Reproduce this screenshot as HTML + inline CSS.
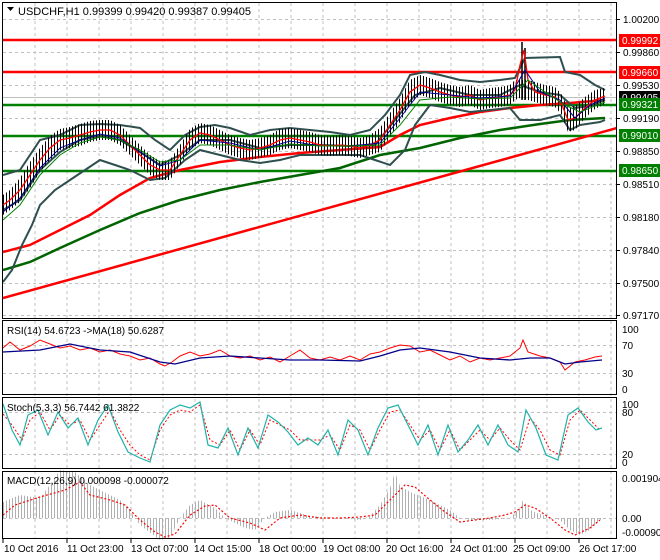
<!DOCTYPE html>
<html><head><meta charset="utf-8"><style>
body{margin:0;background:#fff;width:660px;height:560px;overflow:hidden}
svg{display:block;font-family:"Liberation Sans",sans-serif;font-size:10px}
</style></head><body>
<svg width="660" height="560" viewBox="0 0 660 560">
<defs>
<pattern id="hs" width="3" height="10" patternUnits="userSpaceOnUse"><rect x="0" y="0" width="1" height="10" fill="#b0b0b0"/></pattern>
<pattern id="bars" width="3" height="10" patternUnits="userSpaceOnUse"><rect x="0" y="0" width="1" height="10" fill="#000"/></pattern>
<clipPath id="cm"><rect x="3" y="3" width="614" height="315"/></clipPath>
</defs>
<rect width="660" height="560" fill="#fff"/>
<g stroke="#c0c0c0" stroke-dasharray="3,3" stroke-width="1">
<path d="M35 3V538M67 3V538M99 3V538M131 3V538M163 3V538M195 3V538M227 3V538M259 3V538M291 3V538M323 3V538M355 3V538M387 3V538M419 3V538M451 3V538M483 3V538M515 3V538M547 3V538M579 3V538M611 3V538"/>
<path d="M3 19.5H617M3 52.5H617M3 85.5H617M3 118.5H617M3 151.5H617M3 184.5H617M3 217.5H617M3 250.5H617M3 283.5H617M3 315.5H617"/>
<path d="M3 345.5H617M3 373.5H617M3 412.5H617M3 454.5H617M3 518.5H617"/>
</g>
<g clip-path="url(#cm)">
<line x1="3" y1="97.5" x2="617" y2="97.5" stroke="#c0c0c0"/>
<g stroke-width="2.5">
<line x1="3" y1="40" x2="617" y2="40" stroke="#ff0000"/>
<line x1="3" y1="72" x2="617" y2="72" stroke="#ff0000"/>
<line x1="3" y1="105" x2="617" y2="105" stroke="#008000"/>
<line x1="3" y1="136" x2="617" y2="136" stroke="#008000"/>
<line x1="3" y1="171" x2="617" y2="171" stroke="#008000"/>
</g>
<line x1="3" y1="298" x2="617" y2="128" stroke="#ff0000" stroke-width="2.5"/>
<polyline fill="none" stroke="#006400" stroke-width="2.5" points="3,270 30,262 60,248 100,230 140,213 180,200 220,190 260,182 300,175 340,168 380,155 420,148 460,138 500,130 540,124 570,120 605,118"/>
<polyline fill="none" stroke="#ff0000" stroke-width="2.5" points="3,252 30,245 60,230 90,215 120,195 150,178 180,170 220,162 260,157 300,153 340,150 380,147 400,135 420,125 450,118 480,112 510,108 540,105 570,103 605,100"/>
<g fill="none" stroke="#2f4f4f" stroke-width="2">
<polyline points="3,175 20,170 40,140 60,135 80,125 100,124 120,125 140,128 155,140 170,150 185,135 200,127 215,125 230,128 250,135 270,130 290,128 310,130 330,132 350,135 370,130 385,115 400,95 410,75 425,72 440,75 460,80 480,82 500,80 515,78 525,58 560,57 565,72 580,75 595,85 605,90"/>
<polyline points="3,282 12,270 22,245 32,225 40,205 55,190 70,180 85,170 100,160 115,165 130,170 150,180 165,178 185,160 200,150 220,155 240,160 260,163 280,160 300,155 320,155 340,155 360,155 375,160 390,165 405,150 415,125 430,105 450,108 470,112 490,110 510,108 520,120 540,120 560,115 570,130 580,125 600,122 605,120"/>
<polyline points="3,210 20,200 40,170 60,152 80,140 100,136 120,140 140,152 160,165 180,155 200,140 230,140 260,148 290,145 320,145 350,146 375,145 395,120 415,95 440,88 470,95 500,95 520,85 540,92 560,95 575,108 590,106 605,100"/>
</g>
<!-- bars band -->
<polygon fill="url(#bars)" points="3,195 10,190 20,178 30,162 40,148 50,136 60,129 70,127 80,124 90,121 100,120 110,120 120,125 130,135 140,145 150,155 160,161 170,160 180,145 190,129 200,123 210,125 220,130 230,135 240,138 250,140 260,138 270,135 280,129 290,128 300,130 310,132 320,135 330,136 340,135 350,136 360,138 370,135 380,128 390,113 400,98 410,80 420,75 430,78 440,82 450,85 460,87 470,85 480,90 490,88 500,87 510,85 515,80 520,80 528,80 535,82 545,85 555,87 562,95 568,108 575,106 585,97 595,90 605,88 605,104 595,109 585,118 575,130 568,132 562,115 555,107 545,105 535,102 528,100 520,98 515,100 510,105 500,107 490,108 480,110 470,105 460,107 450,105 440,102 430,98 420,95 410,104 400,122 390,137 380,152 370,155 360,158 350,156 340,155 330,156 320,155 310,152 300,150 290,148 280,150 270,155 260,158 250,160 240,158 230,155 220,150 210,145 200,143 190,150 180,165 170,180 160,180 150,175 140,165 130,155 120,145 110,140 100,140 90,142 80,146 70,148 60,150 50,160 40,172 30,188 20,202 10,210 3,215"/>
<line x1="522" y1="42" x2="522" y2="100" stroke="#000" stroke-width="1.5"/>
<line x1="525" y1="48" x2="525" y2="100" stroke="#000" stroke-width="1.5"/>
<polyline fill="none" stroke="#ff0000" stroke-width="1.3" points="3,205 10,200 20,190 30,175 40,160 50,148 60,140 70,138 80,135 90,132 100,130 110,130 120,135 130,145 140,155 150,165 160,170 170,170 180,155 190,140 200,133 210,135 220,140 230,145 240,148 250,150 260,148 270,145 280,140 290,138 300,140 310,142 320,145 330,146 340,145 350,146 360,148 370,145 380,140 390,125 400,110 410,92 420,85 430,88 440,92 450,95 460,97 470,95 480,100 490,98 500,97 510,95 515,90 520,65 524,50 528,80 535,92 545,95 555,97 562,105 568,120 575,118 585,108 595,100 605,96"/>
<polyline fill="none" stroke="#00008b" stroke-width="1" points="3,212 20,198 40,168 60,148 80,140 100,134 120,138 140,152 160,166 180,160 200,140 230,143 260,150 290,141 320,146 350,146 380,143 400,118 420,92 450,95 480,98 510,96 525,70 540,92 560,100 575,118 590,105 605,98"/>
<polyline fill="none" stroke="#008000" stroke-width="1" points="3,220 20,205 40,175 60,155 80,143 100,137 120,140 140,150 160,162 180,160 200,145 230,145 260,150 290,144 320,146 350,146 380,145 400,125 420,100 450,97 480,99 510,98 528,80 545,92 565,105 580,112 605,102"/>
</g>
<polyline fill="none" stroke="#ff0000" stroke-width="1" points="3,348 10,342 20,350 30,346 40,340 50,344 60,348 70,346 80,350 90,348 100,352 110,350 120,354 130,356 140,360 150,358 160,364 165,366 172,362 180,356 190,352 200,356 210,354 220,350 230,356 240,358 250,356 260,360 270,357 280,362 290,356 300,350 310,358 320,360 330,357 340,360 350,356 360,360 370,354 380,352 390,348 400,345 410,346 420,352 430,350 440,355 450,360 460,356 470,362 480,358 490,360 500,358 510,356 520,348 523,340 528,352 540,356 550,358 560,362 565,370 575,362 585,360 595,357 602,356"/>
<polyline fill="none" stroke="#00008b" stroke-width="1.3" points="3,352 40,350 70,344 100,350 130,352 160,362 175,364 200,358 230,356 260,358 290,360 320,360 360,361 380,356 400,350 420,348 450,352 480,358 510,360 530,358 550,358 565,364 580,362 602,360"/>
<polyline fill="none" stroke="#ff0000" stroke-width="1" stroke-dasharray="2,2" points="3,414 12,425 22,440 30,420 40,412 50,430 60,415 70,425 80,420 90,440 100,425 110,410 120,430 130,445 140,455 150,460 160,430 170,415 180,410 190,412 200,405 210,440 220,445 230,430 240,450 250,430 260,445 270,420 280,425 290,430 300,440 310,440 320,440 330,435 340,450 350,425 360,430 370,450 380,430 390,412 400,410 410,425 420,440 430,430 440,450 450,430 460,450 470,440 480,430 490,440 500,428 510,440 520,450 530,418 540,430 550,450 560,455 570,420 580,410 590,420 600,430"/>
<polyline fill="none" stroke="#20b2aa" stroke-width="1.2" points="3,404 12,430 20,445 28,415 38,410 48,435 58,412 68,428 78,418 88,445 98,420 108,405 118,432 128,452 140,458 150,462 160,425 170,410 180,405 190,408 200,402 208,445 218,448 228,428 238,455 248,428 258,448 268,415 278,422 288,432 298,445 308,438 318,445 328,430 338,455 348,420 358,430 368,455 378,428 388,408 398,405 408,425 418,445 428,425 438,455 448,425 458,452 468,440 478,425 488,445 498,425 508,445 518,452 526,410 536,428 546,455 558,460 568,415 578,408 588,422 596,430 602,428"/>
<polygon fill="url(#hs)" points="3,518 3,502 20,495 40,498 50,485 60,470 75,472 90,485 100,490 120,500 130,510 135,518 140,525 160,540 170,538 180,518 190,505 200,500 215,508 225,518 245,528 255,530 265,518 275,512 290,510 310,516 340,518 360,520 370,516 380,505 390,488 395,472 400,486 410,492 430,500 450,510 460,518 470,520 490,520 510,518 520,508 523,500 530,510 545,516 560,520 570,530 580,535 590,530 600,520 605,518"/>
<polyline fill="none" stroke="#ff0000" stroke-width="1.2" stroke-dasharray="2,2" points="3,515 15,505 40,497 65,490 80,482 90,495 110,500 125,505 140,520 155,532 165,537 175,534 190,515 205,506 215,505 230,518 250,523 265,530 280,518 300,515 320,518 340,518 360,517 375,515 390,500 405,485 415,487 430,500 445,512 460,522 475,520 490,518 505,515 515,512 525,505 535,508 550,518 565,530 575,535 590,528 600,520"/>
<g fill="none" stroke="#000" stroke-width="1">
<rect x="2.5" y="2.5" width="614" height="316"/>
<rect x="2.5" y="320.5" width="614" height="74"/>
<rect x="2.5" y="397.5" width="614" height="71"/>
<rect x="2.5" y="471.5" width="614" height="67"/>
</g>
<path d="M7 7h7l-3.5 4z" fill="#000"/>
<text x="18" y="15" font-size="11">USDCHF,H1  0.99399 0.99420 0.99387 0.99405</text>
<text x="7" y="334" font-size="10">RSI(14) 54.6723  -&gt;MA(18) 50.6287</text>
<text x="7" y="411" font-size="10">Stoch(5,3,3) 56.7442 61.3822</text>
<text x="7" y="484" font-size="10">MACD(12,26,9) 0.000098 -0.000072</text>
<g font-size="10" fill="#000">
<text x="623" y="23">1.00200</text>
<text x="623" y="56">0.99860</text>
<text x="623" y="89">0.99530</text>
<text x="623" y="122">0.99190</text>
<text x="623" y="155">0.98850</text>
<text x="623" y="188">0.98510</text>
<text x="623" y="221">0.98180</text>
<text x="623" y="254">0.97840</text>
<text x="623" y="287">0.97500</text>
<text x="623" y="319">0.97170</text>
</g>
<g stroke="#000"><path d="M617 19.5h3M617 52.5h3M617 85.5h3M617 118.5h3M617 151.5h3M617 184.5h3M617 217.5h3M617 250.5h3M617 283.5h3M617 315.5h3"/></g>
<rect x="619" y="34" width="41" height="13" fill="#ff0000"/><text x="622" y="44" fill="#fff">0.99992</text>
<rect x="619" y="66" width="41" height="13" fill="#ff0000"/><text x="622" y="76" fill="#fff">0.99660</text>
<rect x="619" y="91" width="41" height="13" fill="#000"/><text x="622" y="101" fill="#fff">0.99405</text>
<rect x="619" y="98" width="41" height="13" fill="#008000"/><text x="622" y="108" fill="#fff">0.99321</text>
<rect x="619" y="129" width="41" height="13" fill="#008000"/><text x="622" y="139" fill="#fff">0.99010</text>
<rect x="619" y="164" width="41" height="13" fill="#008000"/><text x="622" y="174" fill="#fff">0.98650</text>
<g font-size="10">
<text x="622" y="333">100</text><text x="622" y="349">70</text><text x="622" y="377">30</text><text x="622" y="393">0</text>
<text x="622" y="408">100</text><text x="622" y="416">80</text><text x="622" y="458">20</text><text x="622" y="466">0</text>
<text x="622" y="482">0.001904</text><text x="622" y="522">0.00</text><text x="622" y="536">-0.000901</text>
</g>
<g stroke="#000"><path d="M3 539v4M67 539v4M131 539v4M195 539v4M259 539v4M323 539v4M387 539v4M451 539v4M515 539v4M579 539v4"/></g>
<g font-size="10">
<text x="4" y="552">10 Oct 2016</text><text x="67" y="552">11 Oct 23:00</text><text x="131" y="552">13 Oct 07:00</text><text x="194" y="552">14 Oct 15:00</text><text x="259" y="552">18 Oct 00:00</text><text x="323" y="552">19 Oct 08:00</text><text x="386" y="552">20 Oct 16:00</text><text x="450" y="552">24 Oct 01:00</text><text x="513" y="552">25 Oct 09:00</text><text x="579" y="552">26 Oct 17:00</text>
</g>
</svg>
</body></html>
